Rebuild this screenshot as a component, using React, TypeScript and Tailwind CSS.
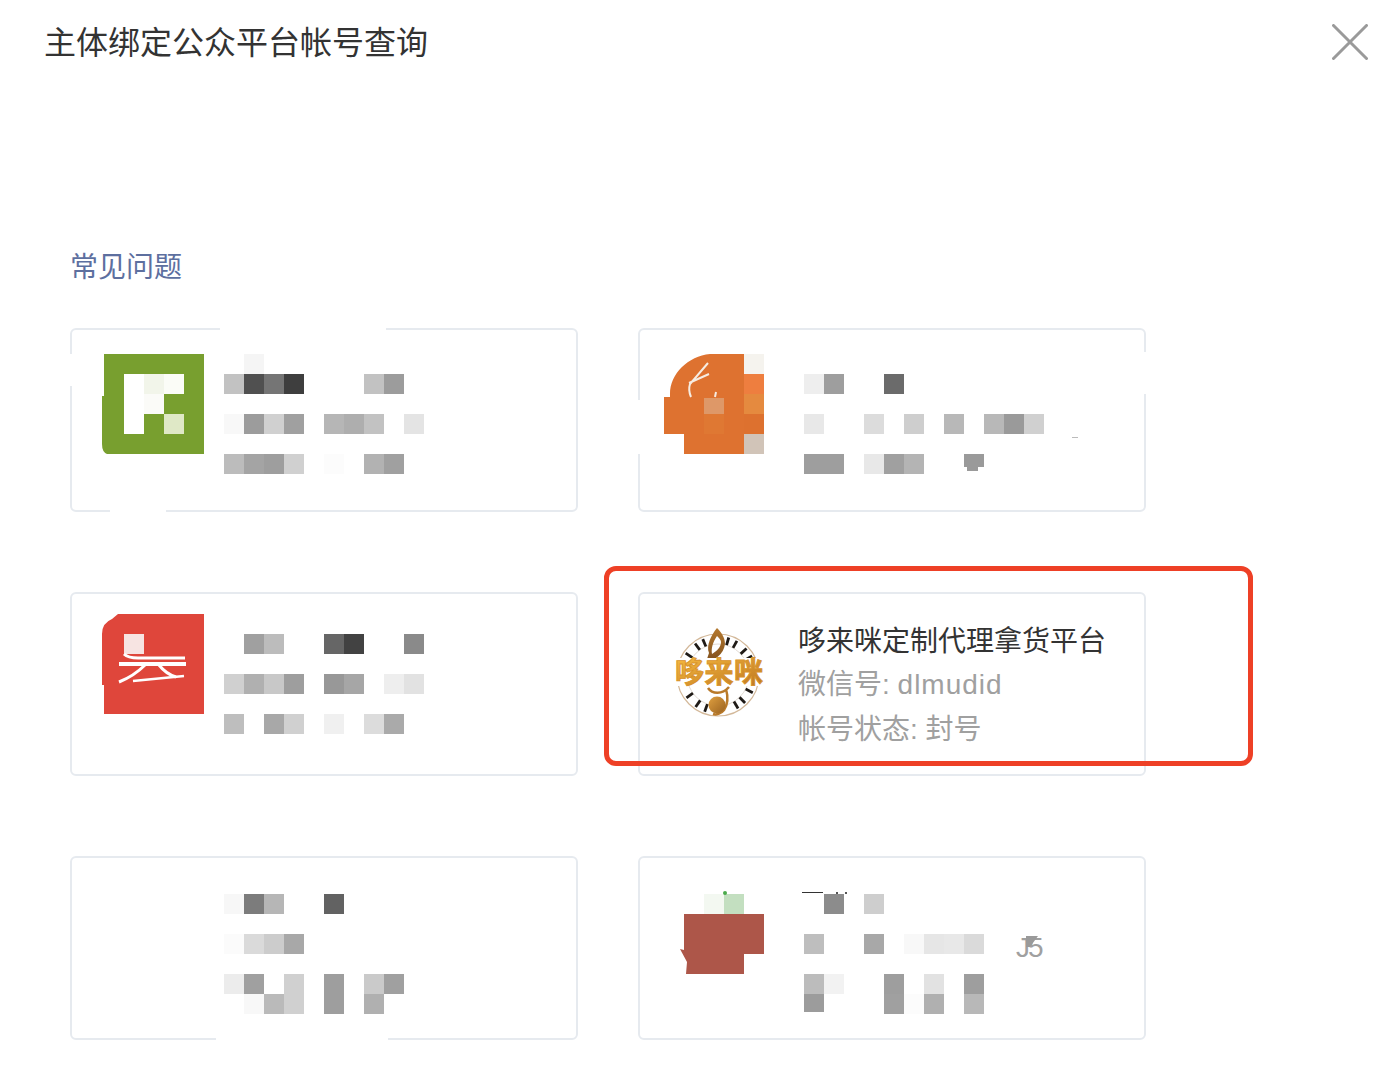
// gray mosaic rows, each cell is one 20px square, value is the gray level in hex
const mosaicA = [
  ["", "f5"],
  ["c2", "50", "75", "3e", "", "", "", "c2", "9c"],
  [],
  ["f8", "9c", "d0", "a0", "", "b6", "ae", "c2", "", "e4"],
  [],
  ["bc", "a4", "9e", "d0", "", "fc", "", "b2", "a0"],
]
const mosaicB = [
  [],
  ["ee", "9e", "", "", "6b"],
  [],
  ["e8", "", "", "dc", "", "ce", "", "b8", "", "b8", "9a", "d0"],
  [],
  ["9e", "9e", "", "e8", "a0", "b4", "", "", "9a"],
]
const mosaicC = [
  ["", "a0", "bc", "", "", "66", "42", "", "", "8a"],
  [],
  ["d0", "b0", "c8", "9e", "", "98", "a6", "", "ee", "e2"],
  [],
  ["be", "", "a8", "d0", "", "f0", "", "dc", "aa"],
]
const mosaicD = [
  ["f7", "7c", "b6", "", "", "62"],
  [],
  ["fb", "da", "cc", "a8"],
  [],
  ["ec", "a0", "", "d0", "", "9e", "", "ca", "a0"],
  ["", "f8", "ba", "d0", "", "9e", "", "b0"],
]
const mosaicF = [
  ["", "8c", "", "ce"],
  [],
  ["be", "", "", "a8", "", "f8", "e6", "e8", "da"],
  [],
  ["bc", "f2", "", "", "9e", "", "e2", "", "9e"],
  ["9c", "", "", "", "a0", "fc", "b0", "", "b8"],
]

function Mosaic({ rows }: { rows: string[][] }) {
  return (
    <div className="flex flex-col">
      {rows.map((row, i) => (
        <div key={i} className="flex h-5">
          {row.map((v, j) => (
            <div key={j} className="h-5 w-5" style={v ? { backgroundColor: `#${v}${v}${v}` } : undefined} />
          ))}
        </div>
      ))}
    </div>
  )
}

function GreenLogo() {
  return (
    <svg width="100" height="100" viewBox="0 0 100 100" className="shrink-0 overflow-visible">
      <path d="M0 0H100V100H3Q-2 98 -2 90V42H0Z" fill="#789f2f" />
      <rect x="20" y="20" width="20" height="60" fill="#ffffff" />
      <rect x="40" y="20" width="20" height="20" fill="#f2f5ea" />
      <rect x="60" y="20" width="20" height="20" fill="#fbfcf7" />
      <rect x="40" y="40" width="20" height="20" fill="#fbfbf8" />
      <rect x="60" y="60" width="20" height="20" fill="#dfe8c6" />
    </svg>
  )
}

function OrangeLogo() {
  return (
    <svg width="100" height="100" viewBox="0 0 100 100" className="shrink-0">
      <path d="M6 43V40C6 20 24 2 46 0H80V100H20V80H0V43Z" fill="#de7230" />
      <rect x="80" y="0" width="20" height="20" fill="#f5f3ee" />
      <rect x="80" y="20" width="20" height="20" fill="#ee7e3f" />
      <rect x="80" y="40" width="20" height="20" fill="#e58a3f" />
      <rect x="80" y="60" width="20" height="20" fill="#dd712f" />
      <rect x="80" y="80" width="20" height="20" fill="#d1c4b8" />
      <rect x="40" y="44" width="20" height="16" fill="#de9868" />
      <rect x="40" y="60" width="20" height="20" fill="#df7833" />
      <path d="M44 9L26 30Q24 36 27 43M25 29L45 20M52 38L51 43" fill="none" stroke="#f6ece2" strokeWidth="2" />
    </svg>
  )
}

function RedLogo() {
  return (
    <svg width="100" height="100" viewBox="0 0 100 100" className="shrink-0 overflow-visible">
      <path d="M14 0H100V100H0V71H-2V20Q-2 9 8 5Z" fill="#df463b" />
      <rect x="20" y="20" width="20" height="20" fill="#f7e4e2" />
      <path d="M20 40Q24 44 34 44H81" fill="none" stroke="#ffffff" strokeWidth="3" />
      <path d="M15 50H82" stroke="#ffffff" strokeWidth="4" />
      <path d="M41 51Q30 62 15 68" fill="none" stroke="#ffffff" strokeWidth="3" />
      <path d="M55 51Q62 60 72 63" fill="none" stroke="#ffffff" strokeWidth="3" />
      <path d="M29 67L80 62" stroke="#ffffff" strokeWidth="2.5" />
    </svg>
  )
}

function MiniLogo() {
  return (
    <svg width="100" height="100" viewBox="0 0 100 100" className="shrink-0 overflow-visible">
      <rect x="40" y="0" width="20" height="20" fill="#f3f8f1" />
      <rect x="60" y="0" width="20" height="20" fill="#c3dfc0" />
      <circle cx="61" cy="-1" r="2" fill="#4bab4b" />
      <path d="M20 20H100V60H80V80H22L23 68L16 55L20 56Z" fill="#ad5649" />
    </svg>
  )
}

// rotation of each black key round the ring of the music logo
const keyAngles = [-56, -36, -23, 16, 29, 47, 61, 117, 136, 149, 200, 215, 234]

function MusicLogo() {
  return (
    <svg width="100" height="100" viewBox="0 0 100 100" className="shrink-0">
      <defs>
        <linearGradient id="gold" x1="0" y1="0" x2="1" y2="1">
          <stop offset="0" stopColor="#f6b93f" />
          <stop offset="1" stopColor="#bb7420" />
        </linearGradient>
        <linearGradient id="bronze" x1="0" y1="0" x2="0" y2="1">
          <stop offset="0" stopColor="#b5792e" />
          <stop offset="1" stopColor="#7f4f1c" />
        </linearGradient>
        <linearGradient id="clef" x1="0" y1="0" x2="1" y2="1">
          <stop offset="0" stopColor="#e0a040" />
          <stop offset="1" stopColor="#9a6220" />
        </linearGradient>
      </defs>
      <circle cx="54" cy="55" r="41" fill="none" stroke="#d3b899" strokeWidth="1.2" />
      <circle cx="54" cy="55" r="31" fill="none" stroke="#e3dcd4" strokeWidth="1" />
      {keyAngles.map((a) => (
        <rect key={a} x="52.6" y="16" width="2.8" height="8" fill="#1f1a16" transform={`rotate(${a} 54 55)`} />
      ))}
      <path
        d="M53 8C47 15 42 26 45 33C44 36 43 39 41 43C50 41 60 34 61 24C61 17 57 12 53 8ZM53 16C49 22 47 28 48 34C53 31 57 27 57 22C57 20 55 18 53 16Z"
        fill="url(#bronze)"
        fillRule="evenodd"
      />
      <path d="M44 68C48 74 58 75 65 67M62 69C64 76 64 84 60 90C57 94 52 95 49 94" fill="none" stroke="#b97a2a" strokeWidth="2.5" />
      <circle cx="53" cy="85" r="8.5" fill="url(#clef)" />
      <rect x="10" y="38" width="90" height="28" fill="#ffffff" />
      <text
        x="11"
        y="63"
        textLength="88"
        fill="url(#gold)"
        stroke="#d8922a"
        strokeWidth="0.9"
        className="text-[29px] font-bold"
      >
        哆来咪
      </text>
    </svg>
  )
}

export default function App() {
  return (
    <div className="h-[1084px] w-full overflow-hidden bg-white font-['Liberation_Sans','Noto_Sans_CJK_SC',sans-serif]">
      <header className="flex items-start justify-between pl-[44px] pr-[6px] pt-[24px]">
        <h1 className="text-[32px] leading-[38px] font-normal text-[#333333]">主体绑定公众平台帐号查询</h1>
        <svg width="36" height="36" viewBox="0 0 36 36" fill="none" stroke="#9a9a9a" strokeWidth="3" strokeLinecap="round">
          <path d="M1.5 1.5L34.5 34.5M34.5 1.5L1.5 34.5" />
        </svg>
      </header>

      <div className="pl-[70px] pt-[186px]">
        <p className="mb-[40px] text-[28px] leading-[40px] text-[#5d6f9f]">常见问题</p>

        <div className="grid w-[1076px] grid-cols-2 gap-x-[60px] gap-y-[80px]">
          <section className="relative flex h-[184px] gap-5 rounded-md border-2 border-[#e6eaef] pl-8 pt-6">
            <GreenLogo />
            <Mosaic rows={mosaicA} />
            <div className="absolute -top-0.5 left-[148px] h-1 w-[166px] bg-white" />
            <div className="absolute -bottom-0.5 left-[38px] h-1 w-[56px] bg-white" />
            <div className="absolute -left-0.5 top-[24px] h-[32px] w-1 bg-white" />
          </section>

          <section className="relative flex h-[184px] gap-10 rounded-md border-2 border-[#e6eaef] pl-6 pt-6">
            <OrangeLogo />
            <Mosaic rows={mosaicB} />
            <div className="absolute -left-0.5 top-[70px] h-[54px] w-1 bg-white" />
            <div className="absolute -right-0.5 top-[22px] h-[42px] w-1 bg-white" />
            <div className="absolute left-[324px] top-[137px] h-[7px] w-5 bg-white" />
            <div className="absolute left-[327px] top-[137px] h-[4px] w-[11px] bg-[#9a9a9a]" />
            <div className="absolute left-[432px] top-[107px] h-px w-[6px] bg-[#bbbbbb]" />
          </section>

          <section className="relative flex h-[184px] gap-5 rounded-md border-2 border-[#e6eaef] pl-8 pt-5">
            <RedLogo />
            <div className="pt-5">
              <Mosaic rows={mosaicC} />
            </div>
          </section>

          <section className="relative flex h-[184px] gap-[34px] rounded-md border-2 border-[#e6eaef] pl-6 pt-[26px]">
            <MusicLogo />
            <div className="flex flex-col text-[28px] leading-[44px] text-[#a0a0a0]">
              <p className="text-[#333333]">哆来咪定制代理拿货平台</p>
              <p className="-mt-px pb-px">
                微信号: <span className="tracking-[1px]">dlmudid</span>
              </p>
              <p>帐号状态: 封号</p>
            </div>
            <div className="absolute -left-[36px] -top-[28px] h-[200px] w-[649px] rounded-xl border-[5px] border-[#ee4026]" />
          </section>

          <section className="relative flex h-[184px] rounded-md border-2 border-[#e6eaef] pl-[152px] pt-9">
            <Mosaic rows={mosaicD} />
            <div className="absolute -bottom-0.5 left-[144px] h-1 w-[172px] bg-white" />
          </section>

          <section className="relative flex h-[184px] gap-10 rounded-md border-2 border-[#e6eaef] pl-6 pt-9">
            <MiniLogo />
            <div className="relative">
              <Mosaic rows={mosaicF} />
              <div className="absolute -left-0.5 -top-0.5 h-px w-[21px] bg-[#333333]" />
              <div className="absolute left-8 -top-0.5 h-0.5 w-0.5 bg-[#555555]" />
              <div className="absolute left-[41px] -top-0.5 h-0.5 w-0.5 bg-[#555555]" />
              <div className="absolute left-0 top-[118px] h-0.5 w-5 bg-white" />
              <span className="absolute left-[212px] top-[36px] text-[28px] leading-[36px] tracking-[-2px] text-[#a0a0a0]">J5</span>
              <svg width="12" height="11" viewBox="0 0 12 11" className="absolute left-[222px] top-[42px]">
                <path d="M0 0H12L4 11H0Z" fill="#9a9a9a" />
              </svg>
            </div>
            <div className="absolute bottom-0 left-[524px] h-0.5 w-2 bg-white" />
          </section>
        </div>
      </div>
    </div>
  )
}
